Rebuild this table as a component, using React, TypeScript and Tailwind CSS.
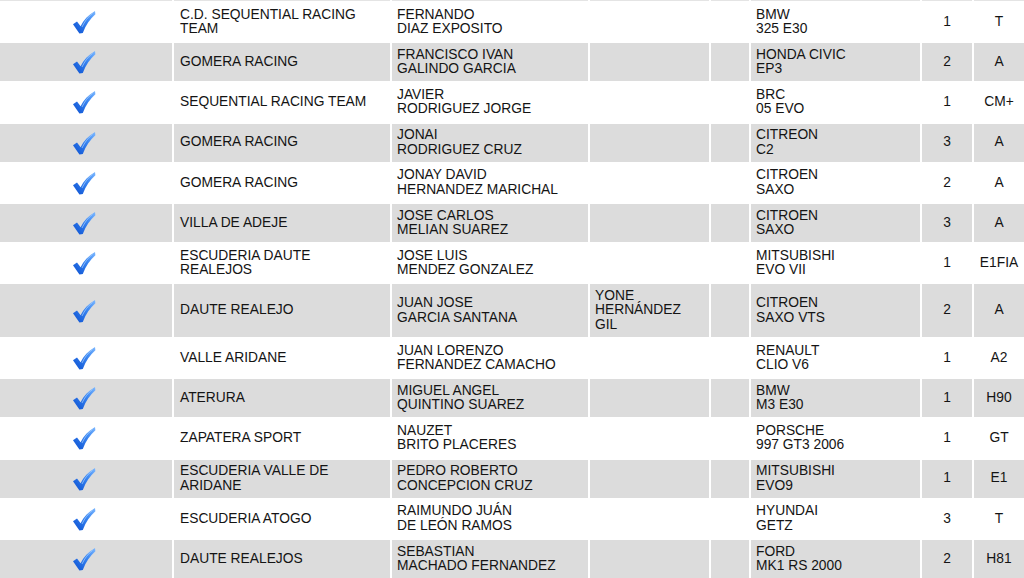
import { useId } from "react";

type Row = {
  team: string;
  driver: string;
  codriver: string;
  car: string;
  num: string;
  cls: string;
};

const rows: Row[] = [
  { team: "C.D. SEQUENTIAL RACING\nTEAM", driver: "FERNANDO\nDIAZ EXPOSITO", codriver: "", car: "BMW\n325 E30", num: "1", cls: "T" },
  { team: "GOMERA RACING", driver: "FRANCISCO IVAN\nGALINDO GARCIA", codriver: "", car: "HONDA CIVIC\nEP3", num: "2", cls: "A" },
  { team: "SEQUENTIAL RACING TEAM", driver: "JAVIER\nRODRIGUEZ JORGE", codriver: "", car: "BRC\n05 EVO", num: "1", cls: "CM+" },
  { team: "GOMERA RACING", driver: "JONAI\nRODRIGUEZ CRUZ", codriver: "", car: "CITREON\nC2", num: "3", cls: "A" },
  { team: "GOMERA RACING", driver: "JONAY DAVID\nHERNANDEZ MARICHAL", codriver: "", car: "CITROEN\nSAXO", num: "2", cls: "A" },
  { team: "VILLA DE ADEJE", driver: "JOSE CARLOS\nMELIAN SUAREZ", codriver: "", car: "CITROEN\nSAXO", num: "3", cls: "A" },
  { team: "ESCUDERIA DAUTE\nREALEJOS", driver: "JOSE LUIS\nMENDEZ GONZALEZ", codriver: "", car: "MITSUBISHI\nEVO VII", num: "1", cls: "E1FIA" },
  { team: "DAUTE REALEJO", driver: "JUAN JOSE\nGARCIA SANTANA", codriver: "YONE\nHERNÁNDEZ\nGIL", car: "CITROEN\nSAXO VTS", num: "2", cls: "A" },
  { team: "VALLE ARIDANE", driver: "JUAN LORENZO\nFERNANDEZ CAMACHO", codriver: "", car: "RENAULT\nCLIO V6", num: "1", cls: "A2" },
  { team: "ATERURA", driver: "MIGUEL ANGEL\nQUINTINO SUAREZ", codriver: "", car: "BMW\nM3 E30", num: "1", cls: "H90" },
  { team: "ZAPATERA SPORT", driver: "NAUZET\nBRITO PLACERES", codriver: "", car: "PORSCHE\n997 GT3 2006", num: "1", cls: "GT" },
  { team: "ESCUDERIA VALLE DE\nARIDANE", driver: "PEDRO ROBERTO\nCONCEPCION CRUZ", codriver: "", car: "MITSUBISHI\nEVO9", num: "1", cls: "E1" },
  { team: "ESCUDERIA ATOGO", driver: "RAIMUNDO JUÁN\nDE LEÓN RAMOS", codriver: "", car: "HYUNDAI\nGETZ", num: "3", cls: "T" },
  { team: "DAUTE REALEJOS", driver: "SEBASTIAN\nMACHADO FERNANDEZ", codriver: "", car: "FORD\nMK1 RS 2000", num: "2", cls: "H81" },
];

const cols = "grid grid-cols-[172px_216px_196px_119px_38px_169px_50px_1fr] gap-x-[2px]";

// marca azul de "inscrito"
function Check() {
  const id = useId();
  return (
    <svg width="24" height="24" viewBox="0 0 24 24" className="mr-[5px]">
      <defs>
        <linearGradient id={id + "g"} x1="1" y1="0" x2="0" y2="1">
          <stop offset="0" stopColor="#7db8ff" />
          <stop offset="0.4" stopColor="#3a86f2" />
          <stop offset="1" stopColor="#0b4fd0" />
        </linearGradient>
        <filter id={id + "f"} x="-20%" y="-20%" width="140%" height="140%">
          <feGaussianBlur stdDeviation="0.45" />
        </filter>
      </defs>
      <path
        d="M1 14.2 L5 11.6 L8.6 16.2 C11.6 10.2 16.2 5 23 1 L23.4 4.2 C18.2 8.6 13.8 15 10.8 23 L7.4 23.4 Z"
        fill={`url(#${id}g)`}
        filter={`url(#${id}f)`}
      />
      <path d="M20.5 3.4 C16 6.8 12.6 11.5 10 17" stroke="#b9dcff" strokeWidth="0.9" fill="none" opacity="0.7" />
    </svg>
  );
}

function Cell({ bg, children, center, pl }: { bg: string; children?: React.ReactNode; center?: boolean; pl?: string }) {
  return (
    <div
      className={`${bg} flex items-center py-[4.6px] whitespace-pre-line ${center ? "justify-center" : pl ?? "pl-[5px]"}`}
    >
      <span>{children}</span>
    </div>
  );
}

export default function App() {
  return (
    <div className="w-[1024px] h-[578px] overflow-hidden bg-white font-['Liberation_Sans',Arial,sans-serif] text-[13.8px] leading-[14.5px] text-[#141414]">
      <div className="flex flex-col gap-y-[2px]">
        {/* pedacito de la fila anterior */}
        <div className={`${cols} h-px`}>
          {Array.from({ length: 8 }).map((_, i) => (
            <div key={i} className="bg-[#e4e4e4]" />
          ))}
        </div>
        {rows.map((r, i) => {
          const bg = i % 2 === 1 ? "bg-[#dcdcdc]" : "bg-white";
          return (
            <div key={i} className={cols}>
              <div className={`${bg} flex items-center justify-center`}>
                <Check />
              </div>
              <Cell bg={bg} pl="pl-[6px]">{r.team}</Cell>
              <Cell bg={bg}>{r.driver}</Cell>
              <Cell bg={bg}>{r.codriver}</Cell>
              <Cell bg={bg} />
              <Cell bg={bg}>{r.car}</Cell>
              <Cell bg={bg} center>{r.num}</Cell>
              <Cell bg={bg} center>{r.cls}</Cell>
            </div>
          );
        })}
      </div>
    </div>
  );
}
